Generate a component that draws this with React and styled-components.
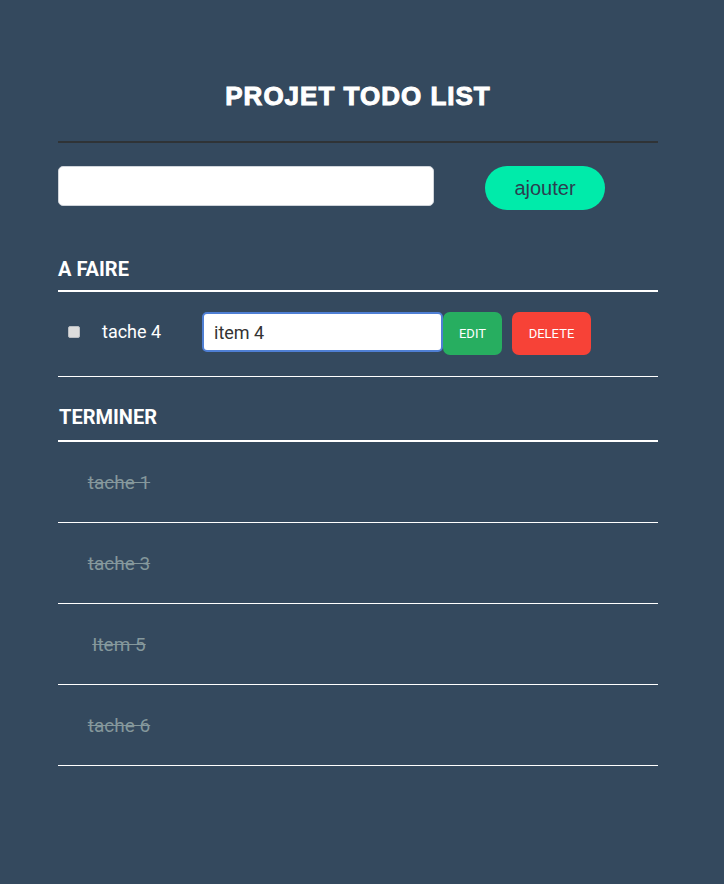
import styled, { createGlobalStyle } from 'styled-components'

const GlobalStyle = createGlobalStyle`
    html, body {
        margin: 0;
        padding: 0;
        background: #34495e;
        font-family: Roboto, "Liberation Sans", sans-serif;
    }
    #root {
        min-height: 884px;
    }
`

const Page = styled.div`
    width: 600px;
    margin-left: 58px;
    padding-bottom: 60px;
`

const Header = styled.header`
    padding-top: 81px;
    padding-bottom: 30px;
    border-bottom: 2px solid #2f3336;
    text-align: center;
`

const Title = styled.h1`
    margin: 0;
    font-family: "Liberation Sans", Arial, sans-serif;
    font-size: 26px;
    line-height: 30px;
    font-weight: 700;
    letter-spacing: 1px;
    color: #fff;
    -webkit-text-stroke: 1px #fff;
`

const AddRow = styled.div`
    display: flex;
    align-items: flex-start;
    margin-top: 23px;
`

const AddInput = styled.input`
    box-sizing: border-box;
    width: 376px;
    height: 40px;
    border: 1px solid #cfd4da;
    border-radius: 5px;
    background: #fff;
    padding: 0 10px;
    font-size: 18px;
    outline: none;
`

const AddButton = styled.button`
    margin-left: 51px;
    width: 120px;
    height: 44px;
    border: none;
    border-radius: 22px;
    background: #00ebaa;
    color: #2c3e50;
    font-family: "Liberation Sans", Arial, sans-serif;
    font-size: 20px;
    cursor: pointer;
`

const SectionTitle = styled.h2`
    margin: ${(p) => p.$top}px 0 0;
    padding-bottom: ${(p) => p.$bottom}px;
    padding-left: ${(p) => p.$indent || 0}px;
    border-bottom: 2px solid #fff;
    font-family: Roboto, "Liberation Sans", sans-serif;
    font-size: 20px;
    line-height: 24px;
    font-weight: 700;
    color: #fff;
`

const TodoRow = styled.div`
    display: flex;
    align-items: flex-start;
    height: 85px;
    padding-top: 20px;
    box-sizing: border-box;
    border-bottom: 1px solid #fff;
    padding-left: 10px;
`

const Check = styled.span`
    box-sizing: border-box;
    width: 12px;
    height: 12px;
    margin-top: 14px;
    border: 1px solid #b9bdc2;
    border-radius: 2px;
    background: #dcdcdc;
`

const Label = styled.span`
    width: 100px;
    margin-left: 22px;
    font-size: 18px;
    line-height: 40px;
    color: #fff;
`

const EditInput = styled.input`
    box-sizing: border-box;
    width: 241px;
    height: 40px;
    border: 2px solid #4f7fd4;
    border-radius: 5px;
    background: #fff;
    padding: 0 10px;
    font-family: Roboto, sans-serif;
    font-size: 18px;
    color: #333;
    outline: none;
`

const ActionButton = styled.button`
    width: ${(p) => p.$w}px;
    height: 43px;
    margin-left: ${(p) => p.$gap || 0}px;
    border: none;
    border-radius: 7px;
    background: ${(p) => p.$bg};
    color: #fff;
    font-family: Roboto, sans-serif;
    font-size: 13px;
    text-transform: uppercase;
    cursor: pointer;
`

const DoneRow = styled.div`
    display: flex;
    align-items: center;
    height: 81px;
    box-sizing: border-box;
    border-bottom: 1px solid #fff;
`

const DoneText = styled.span`
    width: 122px;
    text-align: center;
    font-size: 19px;
    color: #85989c;
    text-decoration: line-through;
`

const done = ['tache 1', 'tache 3', 'Item 5', 'tache 6']

export default function App() {
    return (
        <>
            <GlobalStyle />
            <Page>
                <Header>
                    <Title>PROJET TODO LIST</Title>
                </Header>
                <AddRow>
                    <AddInput type="text" />
                    <AddButton>ajouter</AddButton>
                </AddRow>

                <SectionTitle $top={47} $bottom={9}>A FAIRE</SectionTitle>
                <TodoRow>
                    <Check />
                    <Label>tache 4</Label>
                    <EditInput type="text" defaultValue="item 4" />
                    <ActionButton $w={59} $bg="#27ae60">Edit</ActionButton>
                    <ActionButton $w={79} $gap={10} $bg="#f74237">Delete</ActionButton>
                </TodoRow>

                <SectionTitle $top={28} $bottom={11} $indent={1}>TERMINER</SectionTitle>
                {done.map((t) => (
                    <DoneRow key={t}>
                        <DoneText>{t}</DoneText>
                    </DoneRow>
                ))}
            </Page>
        </>
    )
}
